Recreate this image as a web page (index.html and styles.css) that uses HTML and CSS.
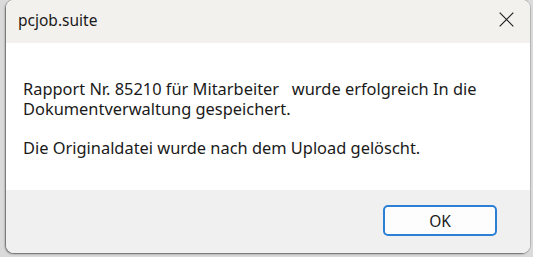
FILE: index.html
```html
<!DOCTYPE html>
<html lang="de">
<head>
<meta charset="utf-8">
<link rel="stylesheet" href="styles.css">
</head>
<body>
<div class="dialog">
  <div class="titlebar">
    <span class="title">pcjob.suite</span>
    <span class="close">
      <svg width="15" height="15" viewBox="0 0 15 15"><path d="M0.7 0.7 L14.3 14.3 M14.3 0.7 L0.7 14.3" stroke="#1a1a1a" stroke-width="1.1" fill="none"/></svg>
    </span>
  </div>
  <div class="content">
    <p class="msg">Rapport Nr. 85210 für Mitarbeiter&nbsp;&nbsp; wurde erfolgreich In die<br>Dokumentverwaltung gespeichert.</p>
    <p class="msg">Die Originaldatei wurde nach dem Upload gelöscht.</p>
  </div>
  <div class="footer">
    <button class="ok">OK</button>
  </div>
</div>
</body>
</html>
```
FILE: styles.css
```css
html, body {
  margin: 0;
  padding: 0;
}
body {
  width: 533px;
  height: 257px;
  background: #dadada;
  padding-left: 6px;
  box-sizing: border-box;
  overflow: hidden;
  font-family: "Noto Sans", "Open Sans", sans-serif;
  color: #1a1a1a;
}
.dialog {
  width: 524px;
  height: 253px;
  border-radius: 8px;
  overflow: hidden;
  background: #ffffff;
  box-shadow: -1px 1px 2px rgba(0,0,0,0.45), 0 0 0 1px rgba(0,0,0,0.15);
  display: flex;
  flex-direction: column;
}
.titlebar {
  height: 43px;
  background: #f3f1ee;
  display: flex;
  align-items: center;
  justify-content: space-between;
  padding: 0 16px 0 12px;
  flex: none;
}
.title {
  font-size: 15.5px;
  color: #1a1a1a;
  margin-top: -4px;
}
.close {
  display: flex;
  margin-top: -4px;
}
.content {
  flex: none;
  height: 147px;
  padding: 36px 0 0 17px;
  box-sizing: border-box;
}
.msg {
  margin: 0 0 19.5px 0;
  font-size: 16.4px;
  line-height: 19.5px;
}
.footer {
  flex: 1;
  background: #f0f0f0;
  display: flex;
  justify-content: flex-end;
  align-items: flex-start;
  padding: 15px 33px 0 0;
}
.ok {
  width: 114px;
  height: 31px;
  border: 2px solid #2b80d6;
  border-radius: 5px;
  background: #fdfdfd;
  font-family: "Noto Sans", "Open Sans", sans-serif;
  font-size: 15.5px;
  color: #1a1a1a;
  padding: 0;
}
```
